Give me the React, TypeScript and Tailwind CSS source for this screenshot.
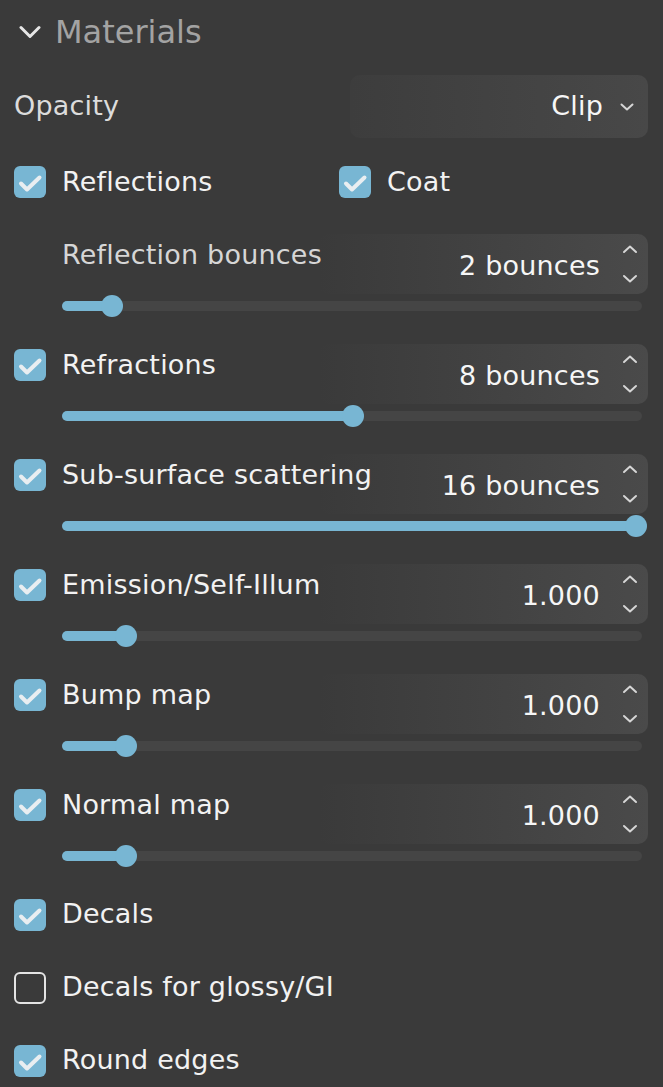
import React from "react";

const font = { fontFamily: '"DejaVu Sans", Verdana, sans-serif' };

function Check({ checked = true }: { checked?: boolean }) {
  if (!checked) {
    return <div className="w-[32px] h-[32px] shrink-0 rounded-[6px] border-2 border-[#e4e4e4]" />;
  }
  return (
    <div className="w-[32px] h-[32px] shrink-0 rounded-[6px] bg-[#78b6d3] flex items-center justify-center">
      <svg width="32" height="32" viewBox="0 0 32 32">
        <path d="M7 17.5 L13 23.5 L25.5 11.5" fill="none" stroke="#e9eef1" strokeWidth="4" strokeLinecap="round" strokeLinejoin="round" />
      </svg>
    </div>
  );
}

function Arrows() {
  return (
    <div className="flex flex-col items-center justify-between h-[40px] w-[16px] shrink-0">
      <svg width="16" height="10" viewBox="0 0 16 10">
        <path d="M2 8 L8 2.5 L14 8" fill="none" stroke="#d6d6d6" strokeWidth="2" strokeLinecap="round" strokeLinejoin="round" />
      </svg>
      <svg width="16" height="10" viewBox="0 0 16 10">
        <path d="M2 2 L8 7.5 L14 2" fill="none" stroke="#d6d6d6" strokeWidth="2" strokeLinecap="round" strokeLinejoin="round" />
      </svg>
    </div>
  );
}

function Slider({ x }: { x: number }) {
  const w = x - 62;
  return (
    <div className="h-[24px] pl-[62px] pr-[21px] flex items-center">
      <div className="relative w-full h-[10px] rounded-full bg-[#454545]">
        <div className="absolute left-0 top-0 h-[10px] rounded-full bg-[#78b6d3]" style={{ width: w }} />
        <div
          className="absolute top-[-6px] w-[22px] h-[22px] rounded-full bg-[#78b6d3]"
          style={{ left: w - 11 }}
        />
      </div>
    </div>
  );
}

const txt = "text-[27px] tracking-[0.2px] whitespace-nowrap";

function Group({
  label,
  value,
  x,
  checkbox = true,
}: {
  label: string;
  value: string;
  x: number;
  checkbox?: boolean;
}) {
  return (
    <div className="h-[110px]">
      <div className="h-[60px] flex items-start pl-[14px] pr-[15px]">
        {checkbox ? (
          <div className="mt-[5px]">
            <Check />
          </div>
        ) : (
          <div className="w-[32px] shrink-0" />
        )}
        <div
          className={
            "relative z-10 flex-1 min-w-0 ml-[16px] leading-[42px] " +
            txt +
            (checkbox ? " text-[#f2f2f2]" : " text-[#d6d6d6]")
          }
        >
          {label}
        </div>
        <div className="h-[60px] w-[330px] shrink-0 rounded-[10px] bg-gradient-to-r from-[#3a3a3a] to-[#4a4a4a] flex items-center justify-end pr-[10px]">
          <div className={txt + " text-[#f6f6f6] mt-[5px] mr-[22px]"}>{value}</div>
          <Arrows />
        </div>
      </div>
      <Slider x={x} />
    </div>
  );
}

function Row({ label, checked = true }: { label: string; checked?: boolean }) {
  return (
    <div className="h-[73px] flex items-center pl-[14px]">
      <Check checked={checked} />
      <div className={"ml-[16px] text-[#f2f2f2] " + txt}>{label}</div>
    </div>
  );
}

export default function App() {
  return (
    <div className="w-[663px] h-[1087px] overflow-hidden bg-[#3a3a3a]" style={font}>
      <div className="h-[64px] flex items-center pl-[19px]">
        <svg width="22" height="14" viewBox="0 0 22 14">
          <path d="M2 2.5 L11 11.5 L20 2.5" fill="none" stroke="#e6e6e6" strokeWidth="3" strokeLinecap="round" strokeLinejoin="round" />
        </svg>
        <div className="ml-[14px] text-[32px] text-[#a3a3a3] whitespace-nowrap">Materials</div>
      </div>
      <div className="mt-[11px] h-[63px] flex items-center pl-[14px] pr-[15px]">
        <div className={txt + " text-[#dcdcdc]"}>Opacity</div>
        <div className="flex-1" />
        <div className="h-[63px] w-[298px] rounded-[10px] bg-gradient-to-r from-[#3d3d3d] to-[#484848] flex items-center justify-end pr-[13px]">
          <div className={txt + " text-[#f6f6f6] mr-[16px]"}>Clip</div>
          <svg width="16" height="10" viewBox="0 0 16 10">
            <path d="M2.5 2.5 L8 7.5 L13.5 2.5" fill="none" stroke="#d6d6d6" strokeWidth="2" strokeLinecap="round" strokeLinejoin="round" />
          </svg>
        </div>
      </div>
      <div className="h-[88px] flex items-center pl-[14px]">
        <Check />
        <div className={"ml-[16px] text-[#f2f2f2] w-[277px] " + txt}>Reflections</div>
        <Check />
        <div className={"ml-[16px] text-[#f2f2f2] " + txt}>Coat</div>
      </div>
      <div className="mt-[8px]">
        <Group label="Reflection bounces" value="2 bounces" x={112} checkbox={false} />
        <Group label="Refractions" value="8 bounces" x={353} />
        <Group label="Sub-surface scattering" value="16 bounces" x={636} />
        <Group label="Emission/Self-Illum" value="1.000" x={126} />
        <Group label="Bump map" value="1.000" x={126} />
        <Group label="Normal map" value="1.000" x={126} />
      </div>
      <div className="mt-[-16px]">
        <Row label="Decals" />
        <Row label="Decals for glossy/GI" checked={false} />
        <Row label="Round edges" />
      </div>
    </div>
  );
}
